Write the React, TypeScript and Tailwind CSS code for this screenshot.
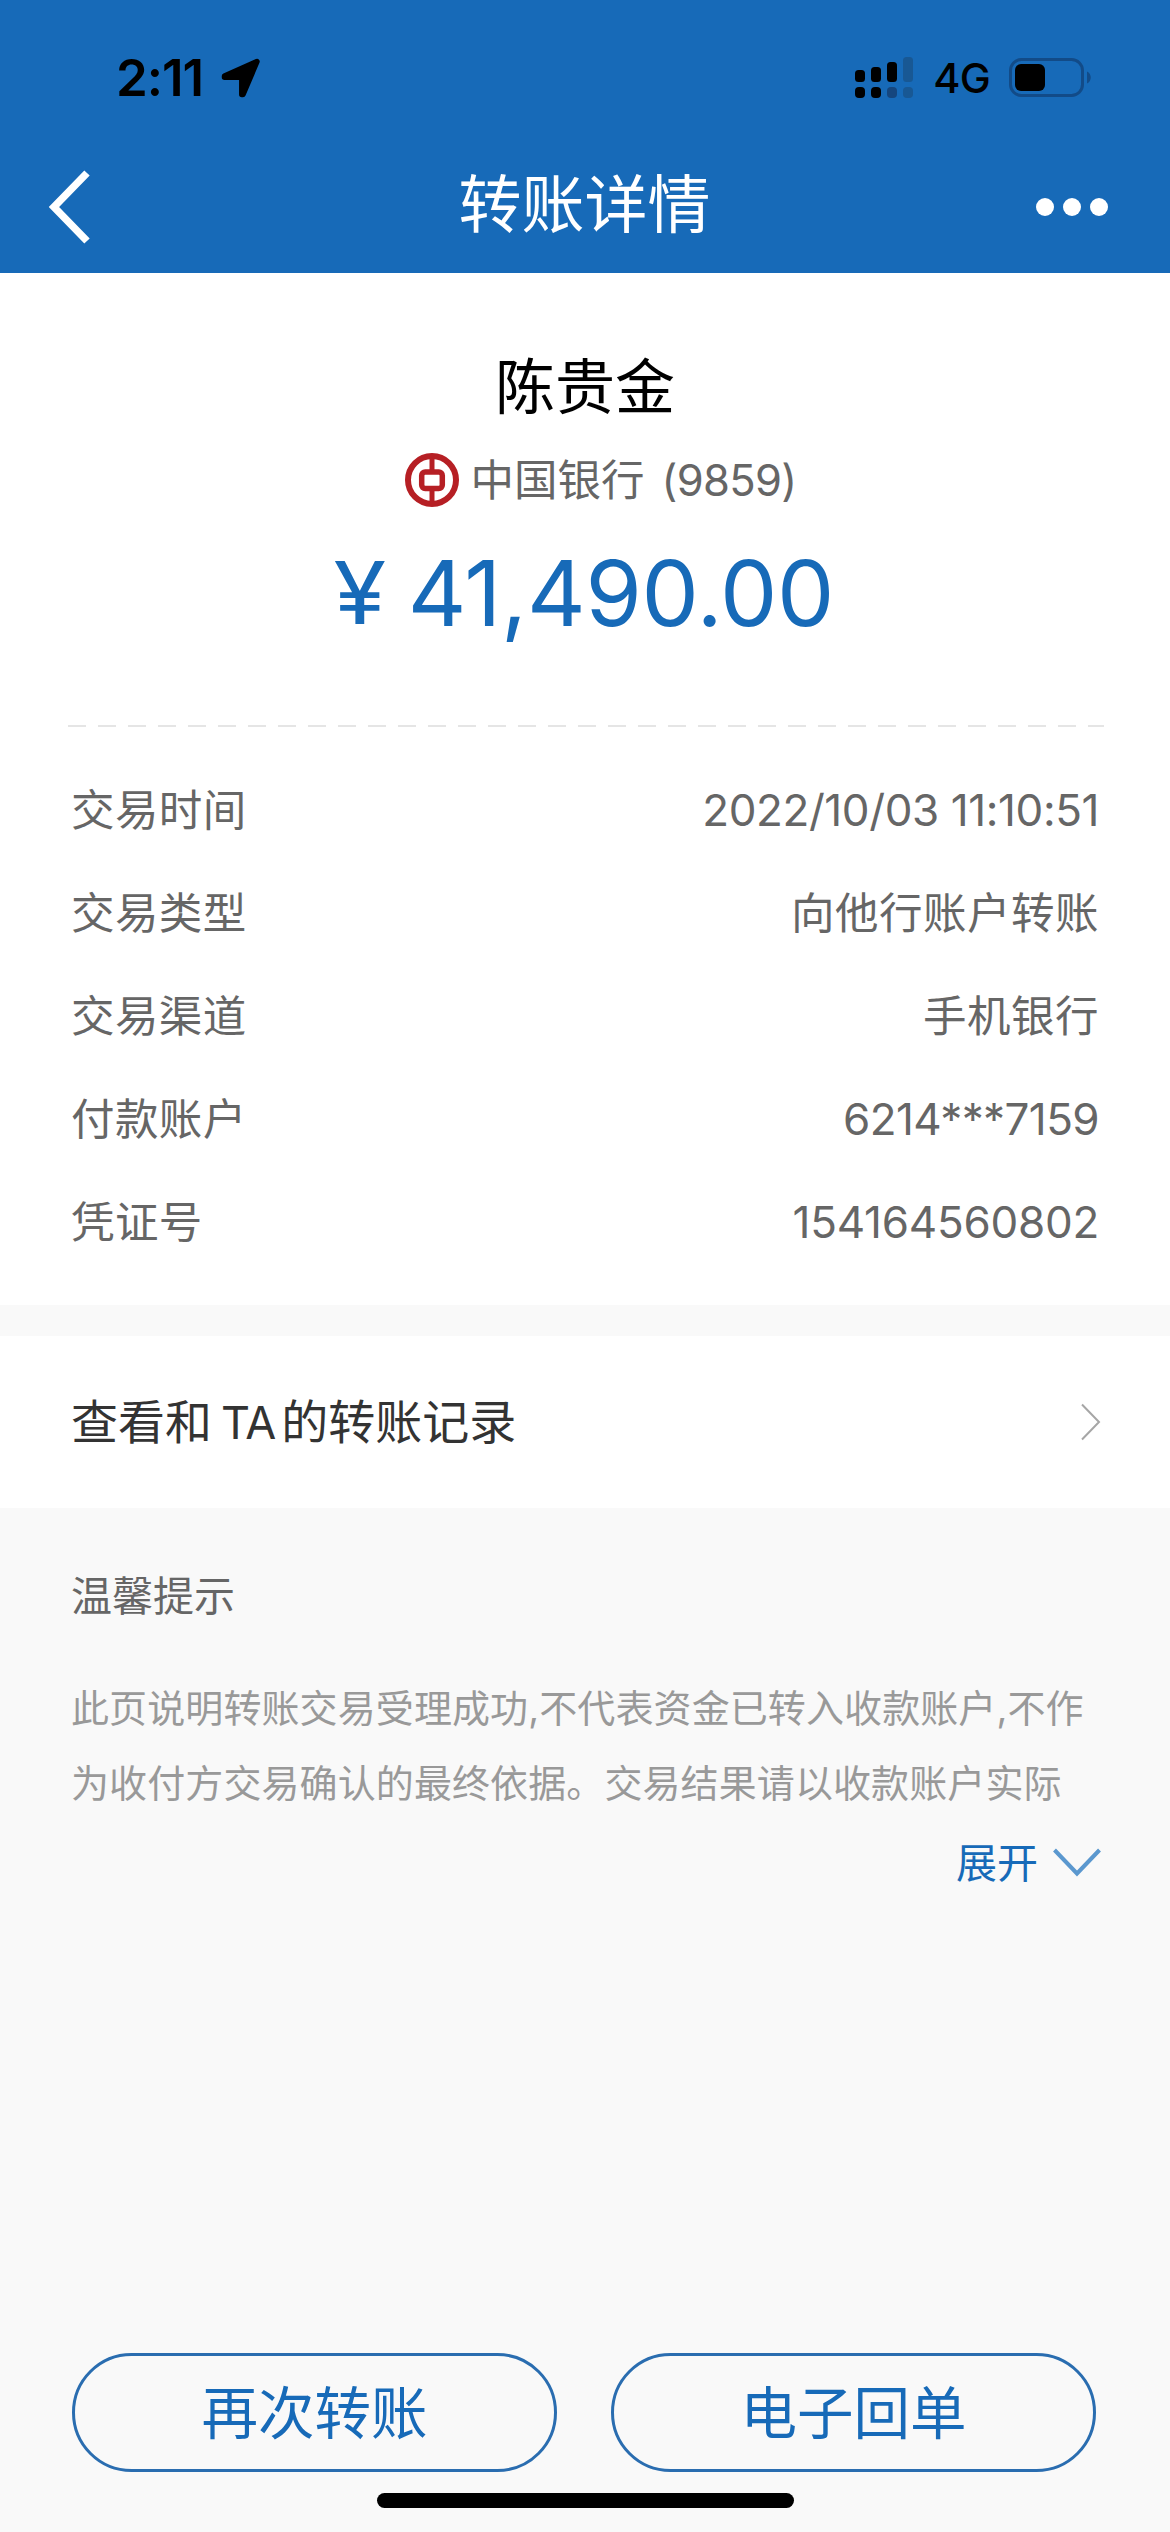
const details = [
  { label: '交易时间', value: '2022/10/03 11:10:51', valueClass: 'text-[44px] tracking-[-0.4px]' },
  { label: '交易类型', value: '向他行账户转账', valueClass: 'tracking-[0.5px]' },
  { label: '交易渠道', value: '手机银行', valueClass: 'tracking-[0.5px]' },
  { label: '付款账户', value: '6214***7159', valueClass: 'text-[44px] tracking-[-0.6px]' },
  { label: '凭证号', value: '154164560802', valueClass: 'text-[44px] tracking-[-0.25px]' },
]

const tips = [
  '此页说明转账交易受理成功,不代表资金已转入收款账户,不作',
  '为收付方交易确认的最终依据。交易结果请以收款账户实际',
]

export default function App() {
  return (
    <div className="flex h-[2532px] w-[1170px] flex-col overflow-hidden bg-[#f9f9f9] font-['Inter','Noto_Sans_CJK_SC',sans-serif] text-[#666666]">
      <header className="h-[273px] bg-[#176ab8]">
        <StatusBar />
        <NavBar />
      </header>

      <section className="h-[1032px] bg-white px-[71px] pt-[84px]">
        <Payee />
        <DashedLine />
        <dl className="mt-[31px]">
          {details.map((row) => (
            <div key={row.label} className="flex h-[103px] items-center justify-between text-[43.5px] leading-[60px]">
              <dt className="tracking-[0.4px]">{row.label}</dt>
              <dd className={row.valueClass}>{row.value}</dd>
            </div>
          ))}
        </dl>
      </section>

      <section className="mt-[31px] flex h-[172px] items-center justify-between bg-white pr-[69px] pl-[71px]">
        <span className="text-[47px] leading-[64px] text-[#333333]">
          查看和<span className="mr-[6px] ml-[9px] text-[45px] tracking-[-1px]">TA</span>的转账记录
        </span>
        <svg className="h-[38px] w-[20px]" viewBox="0 0 20 38" fill="none">
          <path d="M1 1.5 18 19 1 36.5" stroke="#a6a6a6" strokeWidth="2" />
        </svg>
      </section>

      <section className="px-[71px] pt-[60px]">
        <h2 className="text-[41px] leading-[56px]">温馨提示</h2>
        <div className="mt-[47px] text-[38px] leading-[75px] tracking-[0.1px] whitespace-nowrap text-[#999999]">
          {tips.map((line) => (
            <p key={line}>{line}</p>
          ))}
        </div>
        <button className="mt-[12px] -mr-[2px] ml-auto flex h-[60px] items-center gap-[15px] text-[41px] leading-[60px] text-[#176ab8]">
          展开
          <svg className="h-[30px] w-[48px]" viewBox="0 0 48 30" fill="none">
            <path d="M1.5 2 24 25.5 46.5 2" stroke="#5b98cf" strokeWidth="4" />
          </svg>
        </button>
      </section>

      <footer className="mt-auto flex h-[179px] flex-col px-[72px]">
        <div className="flex justify-between pr-[2px]">
          <PillButton>再次转账</PillButton>
          <PillButton>电子回单</PillButton>
        </div>
        <div className="mt-[21px] h-[15px] w-[417px] self-center rounded-full bg-black" />
      </footer>
    </div>
  )
}

function StatusBar() {
  return (
    <div className="flex h-[156px] items-center justify-between pr-[77px] pl-[116px] text-black">
      <div className="flex items-center gap-[18px]">
        <span className="text-[51px] leading-[60px] font-semibold tracking-[-1px]">2:11</span>
        <svg className="h-[40px] w-[40px]" viewBox="0 0 40 40">
          <path
            d="M3.5 18 36 3.5 22 36.5 20.8 36.5 20.8 19.2 3.5 19.2Z"
            fill="black"
            stroke="black"
            strokeWidth="5.5"
            strokeLinejoin="round"
          />
        </svg>
      </div>
      <div className="flex items-center">
        <SignalBars />
        <span className="ml-[20px] text-[41.5px] leading-[60px] font-medium tracking-[-0.8px]">4G</span>
        <svg className="ml-[19px] h-[40px] w-[84px]" viewBox="0 0 84 40">
          <rect x="1.5" y="1.5" width="72" height="36" rx="11" fill="none" stroke="#124b88" strokeWidth="3" />
          <rect x="6" y="6" width="30" height="27" rx="6" fill="black" />
          <path d="M78 13.5c5 2 5 10 0 12z" fill="#124b88" />
        </svg>
      </div>
    </div>
  )
}

function SignalBars() {
  return (
    <svg className="h-[42px] w-[58px]" viewBox="0 0 58 42">
      <rect x="0" y="13" width="10" height="12" rx="3.5" />
      <rect x="16" y="10" width="10" height="15" rx="3.5" />
      <rect x="32" y="5" width="10" height="20" rx="3.5" />
      <rect x="48" y="0" width="10" height="25" rx="3.5" fill="#185894" />
      <rect x="0" y="30" width="10" height="11" rx="4" />
      <rect x="16" y="30" width="10" height="11" rx="4" />
      <rect x="32" y="30" width="10" height="11" rx="4" fill="#15467e" />
      <rect x="48" y="30" width="10" height="11" rx="4" fill="#185894" />
    </svg>
  )
}

function NavBar() {
  return (
    <nav className="flex h-[102px] items-center justify-between pr-[62px] pl-[47px] text-white">
      <svg className="h-[74px] w-[86px]" viewBox="0 0 86 74" fill="none">
        <path d="M40 3 7 37 40 71" stroke="white" strokeWidth="7.5" />
      </svg>
      <h1 className="mb-[6px] text-[63px] leading-[80px]">转账详情</h1>
      <div className="flex gap-[9px]">
        <span className="size-[18px] rounded-full bg-white" />
        <span className="size-[18px] rounded-full bg-white" />
        <span className="size-[18px] rounded-full bg-white" />
      </div>
    </nav>
  )
}

function Payee() {
  return (
    <div className="flex flex-col items-center">
      <div className="h-[60px] text-[60px] leading-[60px] text-black">陈贵金</div>
      <div className="mt-[33px] ml-[31px] flex h-[60px] items-center text-[43.5px] leading-[60px]">
        <BankLogo />
        <span className="ml-[12px]">中国银行</span>
        <span className="ml-[17px] tracking-[-0.7px]">(9859)</span>
      </div>
      <div className="mt-[28px] flex h-[110px] items-center leading-[110px] text-[#176ab8]">
        <span className="scale-x-110 text-[87px]">¥</span>
        <span className="ml-[24px] text-[91px] tracking-[-0.3px]">41,490.00</span>
      </div>
    </div>
  )
}

function BankLogo() {
  return (
    <svg className="size-[54px]" viewBox="0 0 54 54" fill="none" stroke="#b61f24">
      <circle cx="27" cy="27" r="24" strokeWidth="6" />
      <path d="M27 5v14M27 36v13" strokeWidth="5" />
      <rect x="16.7" y="19" width="20.6" height="16.5" rx="3.5" strokeWidth="5.5" />
    </svg>
  )
}

function DashedLine() {
  return (
    <svg className="-mx-[3px] mt-[77px] block h-[2px] w-[1036px]" viewBox="0 0 1036 2">
      <path d="M0 1H1036" stroke="#dddddd" strokeWidth="1.5" strokeDasharray="18 12" />
    </svg>
  )
}

function PillButton({ children }: { children: React.ReactNode }) {
  return (
    <button className="h-[119px] w-[485px] rounded-full border-[3px] border-[#2a6db0] pt-[3px] text-[56.5px] leading-[80px] text-[#176ab8]">
      {children}
    </button>
  )
}
